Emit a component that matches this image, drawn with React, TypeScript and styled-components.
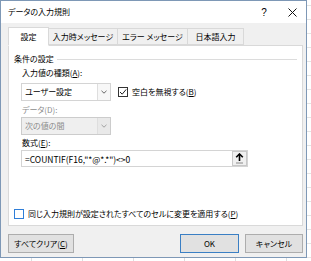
import React from "react";
import styled, { createGlobalStyle } from "styled-components";

const GlobalStyle = createGlobalStyle`
  html, body {
    margin: 0;
    padding: 0;
    width: 311px;
    height: 261px;
    overflow: hidden;
  }
  body {
    background-color: #ffffff;
    background-image:
      linear-gradient(to right, #dedede 1px, transparent 1px),
      linear-gradient(to bottom, #e4e4e4 1px, transparent 1px);
    background-size: 51px 14px;
    background-position: 31px 5px;
    font-family: "Noto Sans CJK JP", "Noto Sans", sans-serif;
    font-feature-settings: "palt";
    white-space: nowrap;
    -webkit-font-smoothing: antialiased;
  }
`;

// Dialog frame
const Dialog = styled.div`
  width: 305px;
  height: 256px;
  border: 1px solid #7e98b6;
  background: #f0f0f0;
  display: flex;
  flex-direction: column;
  color: #000;
  font-size: 8px;
`;

const TitleBar = styled.div`
  height: 22px;
  background: #ffffff;
  display: flex;
  align-items: center;
  padding-left: 7px;
`;

const Title = styled.span`
  flex: 1;
  line-height: 12px;
`;

const TitleButton = styled.span`
  width: 28px;
  height: 22px;
  display: flex;
  align-items: center;
  justify-content: center;
  font-family: "Liberation Sans", sans-serif;
  font-size: 10px;
`;

const Body = styled.div`
  flex: 1;
  display: flex;
  flex-direction: column;
  padding: 3px 3px 0 7px;
`;

// Tabs
const TabStrip = styled.div`
  display: flex;
  align-items: flex-end;
  height: 19px;
  position: relative;
  z-index: 1;
`;

const Tab = styled.div<{ $w: number; $active?: boolean }>`
  width: ${(p) => p.$w}px;
  height: ${(p) => (p.$active ? 19 : 17)}px;
  box-sizing: border-box;
  display: flex;
  align-items: center;
  justify-content: center;
  background: ${(p) => (p.$active ? "#ffffff" : "#f0f0f0")};
  border: 1px solid #d9d9d9;
  border-bottom: ${(p) => (p.$active ? "1px solid #ffffff" : "1px solid #d9d9d9")};
  margin-left: -1px;
  margin-bottom: ${(p) => (p.$active ? -1 : 0)}px;
  &:first-child {
    margin-left: 0;
  }
`;

const Panel = styled.div`
  height: 181px;
  box-sizing: border-box;
  background: #ffffff;
  border: 1px solid #d9d9d9;
  display: flex;
  flex-direction: column;
`;

const GroupHeader = styled.div`
  display: flex;
  align-items: center;
  margin: 7px 5px 0 5px;
  line-height: 12px;
`;

const GroupLine = styled.div`
  flex: 1;
  height: 1px;
  background: #dcdcdc;
  margin-left: 3px;
`;

const FieldLabel = styled.div<{ $disabled?: boolean; $top: number }>`
  margin: ${(p) => p.$top}px 0 0 13px;
  line-height: 12px;
  color: ${(p) => (p.$disabled ? "#8c8c8c" : "#000")};
`;

const Key = styled.span`
  text-decoration: underline;
  text-underline-offset: 1px;
`;

const Row = styled.div<{ $top: number }>`
  display: flex;
  align-items: center;
  margin: ${(p) => p.$top}px 0 0 12px;
`;

const Select = styled.div<{ $disabled?: boolean }>`
  width: 90px;
  height: 18px;
  box-sizing: border-box;
  border: 1px solid ${(p) => (p.$disabled ? "#cccccc" : "#d4d4d4")};
  background: ${(p) => (p.$disabled ? "#efefef" : "#ffffff")};
  color: ${(p) => (p.$disabled ? "#8c8c8c" : "#000")};
  display: flex;
  align-items: center;
`;

const SelectText = styled.span`
  flex: 1;
  padding-left: 3px;
  line-height: 12px;
`;

const SelectArrow = styled.span<{ $disabled?: boolean }>`
  width: 13px;
  height: 100%;
  box-sizing: border-box;
  border-left: 1px solid #dedede;
  background: ${(p) => (p.$disabled ? "#e9e9e9" : "#f7f7f7")};
  display: flex;
  align-items: center;
  justify-content: center;
`;

const Check = styled.span<{ $blue?: boolean }>`
  width: 10px;
  height: 10px;
  box-sizing: border-box;
  border: 1px solid ${(p) => (p.$blue ? "#2f7ed8" : "#333333")};
  background: #ffffff;
  display: flex;
  align-items: center;
  justify-content: center;
`;

const CheckLabel = styled.span`
  margin-left: 4px;
  line-height: 12px;
`;

const Formula = styled.div`
  width: 227px;
  height: 17px;
  box-sizing: border-box;
  border: 1px solid #d4d4d4;
  display: flex;
  align-items: center;
  margin: 1px 0 0 12px;
`;

const FormulaText = styled.span`
  flex: 1;
  padding-left: 3px;
  font-size: 8.5px;
  line-height: 12px;
`;

const CollapseButton = styled.span`
  width: 15px;
  height: 15px;
  box-sizing: border-box;
  border: 1px solid #c8c8c8;
  background: #f0f0f0;
  display: flex;
  align-items: center;
  justify-content: center;
`;

const ApplyRow = styled.div`
  display: flex;
  align-items: center;
  margin: auto 0 5px 5px;
`;

const Footer = styled.div`
  display: flex;
  align-items: center;
  margin-top: 8px;
`;

const Button = styled.div<{ $w: number; $default?: boolean }>`
  width: ${(p) => p.$w}px;
  height: 19px;
  box-sizing: border-box;
  border: 1px solid ${(p) => (p.$default ? "#3a7fc4" : "#adadad")};
  background: #e1e1e1;
  display: flex;
  align-items: center;
  justify-content: center;
  line-height: 12px;
`;

const Spacer = styled.div`
  flex: 1;
`;

const Chevron = ({ color }: { color: string }) => (
  <svg width="6" height="4" viewBox="0 0 6 4">
    <path d="M0.5 0.8 L3 3.2 L5.5 0.8" fill="none" stroke={color} strokeWidth="0.9" />
  </svg>
);

export default function App() {
  return (
    <>
      <GlobalStyle />
      <Dialog>
        <TitleBar>
          <Title>データの入力規則</Title>
          <TitleButton>?</TitleButton>
          <TitleButton>
            <svg width="9" height="9" viewBox="0 0 9 9">
              <path d="M0.5 0.5 L8.5 8.5 M8.5 0.5 L0.5 8.5" stroke="#111" strokeWidth="1" />
            </svg>
          </TitleButton>
        </TitleBar>
        <Body>
          <TabStrip>
            <Tab $w={41} $active>設定</Tab>
            <Tab $w={70}>入力時メッセージ</Tab>
            <Tab $w={71}>エラー メッセージ</Tab>
            <Tab $w={57}>日本語入力</Tab>
          </TabStrip>
          <Panel>
            <GroupHeader>
              条件の設定
              <GroupLine />
            </GroupHeader>
            <FieldLabel $top={2}>
              入力値の種類(<Key>A</Key>):
            </FieldLabel>
            <Row $top={4}>
              <Select>
                <SelectText>ユーザー設定</SelectText>
                <SelectArrow>
                  <Chevron color="#555" />
                </SelectArrow>
              </Select>
              <Check style={{ marginLeft: 7 }}>
                <svg width="8" height="8" viewBox="0 0 8 8">
                  <path d="M1 4 L3.2 6.2 L7.2 1.4" fill="none" stroke="#222" strokeWidth="1" />
                </svg>
              </Check>
              <CheckLabel>
                空白を無視する(<Key>B</Key>)
              </CheckLabel>
            </Row>
            <FieldLabel $disabled $top={3}>
              データ(D):
            </FieldLabel>
            <Row $top={1}>
              <Select $disabled>
                <SelectText>次の値の間</SelectText>
                <SelectArrow $disabled>
                  <Chevron color="#999" />
                </SelectArrow>
              </Select>
            </Row>
            <FieldLabel $top={2}>
              数式(<Key>E</Key>):
            </FieldLabel>
            <Formula>
              <FormulaText>=COUNTIF(F16,"*@*.*")&lt;&gt;0</FormulaText>
              <CollapseButton>
                <svg width="9" height="11" viewBox="0 0 9 11">
                  <path d="M4.5 1 L4.5 8" stroke="#000" strokeWidth="1.6" />
                  <path d="M1.2 4.3 L4.5 1 L7.8 4.3" fill="none" stroke="#000" strokeWidth="1.6" />
                  <rect x="1" y="9.4" width="7" height="1.2" fill="#9a9a9a" />
                </svg>
              </CollapseButton>
            </Formula>
            <ApplyRow>
              <Check $blue />
              <CheckLabel>
                同じ入力規則が設定されたすべてのセルに変更を適用する(<Key>P</Key>)
              </CheckLabel>
            </ApplyRow>
          </Panel>
          <Footer>
            <Button $w={66}>
              すべてクリア(<Key>C</Key>)
            </Button>
            <Spacer />
            <Button $w={59} $default>
              OK
            </Button>
            <Button $w={58} style={{ marginLeft: 6 }}>
              キャンセル
            </Button>
          </Footer>
        </Body>
      </Dialog>
    </>
  );
}
